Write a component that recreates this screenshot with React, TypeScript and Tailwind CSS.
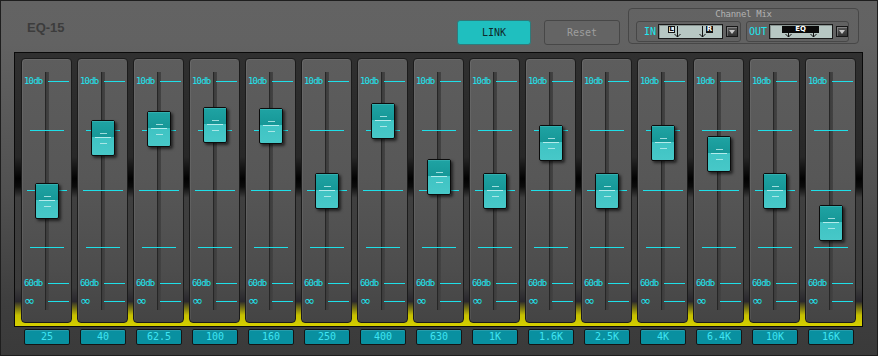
import React from "react";

const bands: [string, number][] = [
  ["25", 124],
  ["40", 61],
  ["62.5", 52],
  ["100", 48],
  ["160", 49],
  ["250", 114],
  ["400", 44],
  ["630", 100],
  ["1K", 114],
  ["1.6K", 66],
  ["2.5K", 114],
  ["4K", 66],
  ["6.4K", 77],
  ["10K", 114],
  ["16K", 146],
];

function Knob({ top }: { top: number }) {
  return (
    <div
      className="absolute left-[13px] w-[24px] h-[36px] rounded-[2px] border border-[#0c0c0c] shadow-[2px_2px_3px_rgba(0,0,0,0.6)] bg-[linear-gradient(to_bottom,#1fa3a3_0px,#169797_16px,#3fc3c3_16px,#47c8c8_100%)]"
      style={{ top }}
    >
      <div className="absolute left-0 right-0 top-0 h-px bg-[#33b0b0]" />
      <div className="absolute left-[8px] top-[12px] w-[7px] h-px bg-[#9fdcdc]" />
      <div className="absolute left-[3px] top-[16px] w-[16px] h-px bg-[#b4ecec]" />
      <div className="absolute left-[8px] top-[22px] w-[7px] h-px bg-[#a8e6e6]" />
    </div>
  );
}

function Strip({ top }: { top: number }) {
  const txt =
    "absolute left-[2px] h-[9px] leading-[9px] text-[9px] tracking-[-0.8px] text-[#1ee6f0] font-['DejaVu_Sans_Mono',monospace]";
  return (
    <div className="relative w-[51px] h-[265px] shrink-0 rounded-[4px] border border-[#1b1b1b] bg-[linear-gradient(to_bottom,#5d5d5d,#575757_45%,#4d4d4d_80%,#444444)] shadow-[inset_1px_1px_0_rgba(255,255,255,0.07)]">
      <div className="absolute left-[23px] top-[13px] w-[4px] h-[238px] bg-[linear-gradient(to_right,#262626_0,#262626_1px,#3c3c3c_1px,#434343)]" />
      <span className={`${txt} top-[18px]`}>10db</span>
      <div className="absolute left-[26px] top-[22px] w-[21px] h-px bg-[#1fdfe8]" />
      <div className="absolute left-[8px] top-[71px] w-[34px] h-px bg-[#1fdfe8]" />
      <div className="absolute left-[5px] top-[131px] w-[40px] h-px bg-[#1fdfe8]" />
      <div className="absolute left-[8px] top-[188px] w-[34px] h-px bg-[#1fdfe8]" />
      <span className={`${txt} top-[220px]`}>60db</span>
      <div className="absolute left-[26px] top-[224px] w-[21px] h-px bg-[#1fdfe8]" />
      <span className="absolute left-[2px] top-[236px] h-[12px] leading-[12px] text-[13px] text-[#1ee6f0] font-['DejaVu_Sans',sans-serif]">
        ∞
      </span>
      <div className="absolute left-[26px] top-[242px] w-[21px] h-px bg-[#1fdfe8]" />
      <Knob top={top} />
    </div>
  );
}

function Dropdown() {
  return (
    <div className="w-[12px] h-[11px] shrink-0 border border-[#161616] bg-[linear-gradient(to_bottom,#5a5a5a,#333333)] shadow-[inset_1px_1px_0_rgba(255,255,255,0.25)] flex items-center justify-center">
      <svg width="6" height="4" viewBox="0 0 6 4">
        <polygon points="0,0 6,0 3,4" fill="#c8c8c8" />
      </svg>
    </div>
  );
}

function Arrow({ x, y1, y2 }: { x: number; y1: number; y2: number }) {
  return (
    <g stroke="#111" strokeWidth="1" fill="none">
      <line x1={x + 0.5} y1={y1} x2={x + 0.5} y2={y2} />
      <polyline points={`${x - 2.5},${y2 - 3} ${x + 0.5},${y2} ${x + 3.5},${y2 - 3}`} />
    </g>
  );
}

export default function App() {
  const mono = "font-['DejaVu_Sans_Mono',monospace]";
  return (
    <div className="w-[878px] h-[356px] border border-[#1e1e1e] bg-[linear-gradient(to_bottom,#636363_0%,#626262_12%,#505050_55%,#3e3e3e_86%,#3a3a3a_100%)] flex flex-col overflow-hidden">
      {/* header */}
      <div className="h-[51px] shrink-0 flex items-start">
        <div className="ml-[26px] mt-[20px] text-[13px] leading-[13px] font-bold text-[#3c3c3c] font-['Liberation_Sans',Arial,sans-serif]">
          EQ-15
        </div>
        <div className="flex-1" />
        <div
          className={`mt-[19px] w-[74px] h-[25px] rounded-[3px] border border-[#2f7a7a] bg-[#1fbfbf] flex items-center justify-center text-[10px] text-[#0f2a2a] ${mono}`}
        >
          LINK
        </div>
        <div
          className={`ml-[13px] mt-[19px] w-[76px] h-[25px] rounded-[3px] border border-[#474747] bg-[#646464] flex items-center justify-center text-[10px] text-[#9e9e9e] ${mono}`}
        >
          Reset
        </div>
        <div className="ml-[8px] mr-[18px] mt-[7px] w-[231px] h-[36px] rounded-[4px] border border-[#474747] flex flex-col">
          <div
            className={`h-[11px] leading-[11px] text-center text-[9px] tracking-[-0.3px] text-[#b2b2b2] ${mono}`}
          >
            Channel Mix
          </div>
          <div className="mt-[1px] ml-[7px] flex gap-[5px]">
            {/* IN */}
            <div className="w-[105px] h-[21px] rounded-[3px] border border-[#474747] flex items-center pl-[7px]">
              <span className={`w-[14px] text-[10px] leading-[10px] text-[#1ee6f0] ${mono}`}>IN</span>
              <div className="relative w-[65px] h-[15px] border border-[#1a1a1a] bg-[#b7c7c3] shadow-[inset_1px_1px_0_rgba(0,0,0,0.25)]">
                <span className="absolute left-[9px] top-[1px] w-[7px] h-[7px] border border-[#111] bg-[#e8ecea] text-[#111] text-[7px] leading-[5px] font-bold text-center font-['DejaVu_Sans',sans-serif]">
                  L
                </span>
                <span className="absolute left-[47px] top-[1px] w-[7px] h-[7px] bg-[#111] text-white text-[7px] leading-[7px] font-bold text-center font-['DejaVu_Sans',sans-serif]">
                  R
                </span>
                <svg className="absolute left-0 top-0" width="63" height="13" viewBox="0 0 63 13">
                  <Arrow x={18} y1={1} y2={12} />
                  <Arrow x={43} y1={1} y2={12} />
                </svg>
              </div>
              <div className="ml-[3px]">
                <Dropdown />
              </div>
            </div>
            {/* OUT */}
            <div className="w-[103px] h-[21px] rounded-[3px] border border-[#474747] flex items-center pl-[2px]">
              <span className={`w-[20px] text-[10px] leading-[10px] text-[#1ee6f0] ${mono}`}>OUT</span>
              <div className="relative w-[64px] h-[15px] border border-[#1a1a1a] bg-[#b7c7c3] shadow-[inset_1px_1px_0_rgba(0,0,0,0.25)]">
                <svg className="absolute left-0 top-0" width="62" height="13" viewBox="0 0 62 13">
                  <Arrow x={18} y1={5} y2={12} />
                  <Arrow x={43} y1={5} y2={12} />
                </svg>
                <span className="absolute left-[12px] top-[1px] w-[37px] h-[7px] bg-[#0a0a0a] text-white text-[7px] leading-[7px] font-bold text-center font-['DejaVu_Sans',sans-serif]">
                  EQ
                </span>
              </div>
              <div className="ml-[3px]">
                <Dropdown />
              </div>
            </div>
          </div>
        </div>
      </div>

      {/* fader panel */}
      <div className="ml-[13px] w-[849px] h-[275px] shrink-0 border border-[#0a0a0a] pl-[6px] pt-[5px] flex gap-[5px] bg-[linear-gradient(to_bottom,#303030_0%,#282828_38%,#020202_46%,#0c0c0c_49%,#3f3f3f_53%,#3b3b3b_86%,#29272d_91%,#c6c000_96%,#d6d000_100%)]">
        {bands.map(([label, top]) => (
          <Strip key={label} top={top} />
        ))}
      </div>

      {/* labels */}
      <div className="mt-[2px] ml-[23px] flex gap-[10px]">
        {bands.map(([label]) => (
          <div
            key={label}
            className={`w-[46px] h-[16px] shrink-0 rounded-[2px] border border-[#141414] bg-[#0990a0] shadow-[inset_0_1px_0_rgba(255,255,255,0.12)] flex items-center justify-center text-[10px] leading-[10px] text-[#40e4f2] ${mono}`}
          >
            {label}
          </div>
        ))}
      </div>
    </div>
  );
}
